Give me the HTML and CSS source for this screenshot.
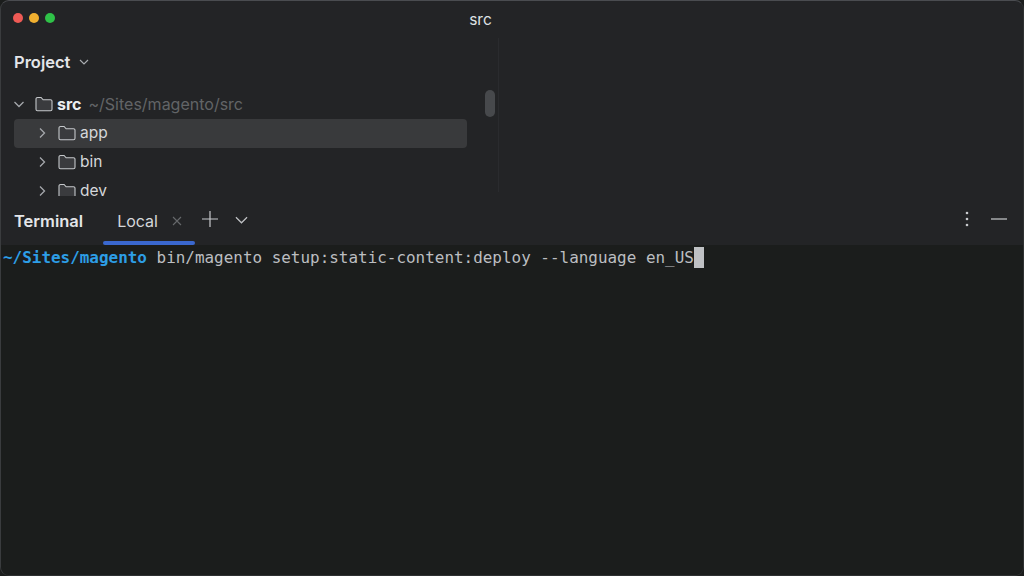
FILE: index.html
```html
<!DOCTYPE html>
<html lang="en">
<head>
<meta charset="utf-8">
<title>src</title>
<link rel="stylesheet" href="styles.css">
</head>
<body>
<div class="window">
  <header class="titlebar">
    <div class="lights">
      <span class="light red"></span>
      <span class="light yellow"></span>
      <span class="light green"></span>
    </div>
    <div class="title">src</div>
  </header>
  <main class="workspace">
    <section class="project">
      <div class="project-head">
        <span class="project-title">Project</span>
        <svg class="ic-head" viewBox="0 0 12 12"><path d="M2 4l4 4 4-4"/></svg>
      </div>
      <ul class="tree">
        <li class="row root">
          <svg class="arrow" viewBox="0 0 12 12"><path d="M1.500 4l4.500 4.500L10.500 4"/></svg>
          <svg class="folder" viewBox="0 0 18 16"><path class="folder-fill" d="M1 3a1.5 1.5 0 0 1 1.5-1.5h3.6l2 2.3h7.4A1.5 1.5 0 0 1 17 5.300v8a1.500 1.500 0 0 1-1.500 1.500h-13A1.500 1.500 0 0 1 1 13.300z"/></svg>
          <span class="name strong">src</span>
          <span class="path">~/Sites/magento/src</span>
        </li>
        <li class="row child selected">
          <svg class="arrow" viewBox="0 0 12 12"><path d="M4 1.500l4.500 4.500L4 10.500"/></svg>
          <svg class="folder" viewBox="0 0 18 16"><path class="folder-fill" d="M1 3a1.5 1.5 0 0 1 1.5-1.5h3.6l2 2.3h7.4A1.5 1.5 0 0 1 17 5.300v8a1.500 1.500 0 0 1-1.500 1.500h-13A1.500 1.500 0 0 1 1 13.300z"/></svg>
          <span class="name">app</span>
        </li>
        <li class="row child">
          <svg class="arrow" viewBox="0 0 12 12"><path d="M4 1.500l4.500 4.500L4 10.500"/></svg>
          <svg class="folder" viewBox="0 0 18 16"><path class="folder-fill" d="M1 3a1.5 1.5 0 0 1 1.5-1.5h3.6l2 2.3h7.4A1.5 1.5 0 0 1 17 5.300v8a1.500 1.500 0 0 1-1.500 1.500h-13A1.500 1.500 0 0 1 1 13.300z"/></svg>
          <span class="name">bin</span>
        </li>
        <li class="row child">
          <svg class="arrow" viewBox="0 0 12 12"><path d="M4 1.500l4.500 4.500L4 10.500"/></svg>
          <svg class="folder" viewBox="0 0 18 16"><path class="folder-fill" d="M1 3a1.5 1.5 0 0 1 1.5-1.5h3.6l2 2.3h7.4A1.5 1.5 0 0 1 17 5.300v8a1.500 1.500 0 0 1-1.500 1.500h-13A1.500 1.500 0 0 1 1 13.300z"/></svg>
          <span class="name">dev</span>
        </li>
      </ul>
      <div class="scroll-thumb"></div>
    </section>
    <section class="editor"></section>
  </main>
  <nav class="toolbar">
    <span class="tool-title">Terminal</span>
    <div class="tab">
      <span class="tab-label">Local</span>
      <svg class="tab-close" viewBox="0 0 10 10"><path d="M1 1l8 8M9 1l-8 8"/></svg>
    </div>
    <svg class="ic-plus" viewBox="0 0 16 16"><path d="M8 0v16M0 8h16"/></svg>
    <svg class="ic-chevron" viewBox="0 0 14 8"><path d="M1 1l6 6 6-6"/></svg>
    <div class="tool-actions">
      <svg class="ic-more" viewBox="0 0 4 16"><circle cx="2" cy="2" r="1.300"/><circle cx="2" cy="8" r="1.300"/><circle cx="2" cy="14" r="1.300"/></svg>
      <svg class="ic-min" viewBox="0 0 16 2"><path d="M0 1h16"/></svg>
    </div>
  </nav>
  <section class="terminal">
    <div class="line"><span class="cwd">~/Sites/magento</span><span class="cmd"> bin/magento setup:static-content:deploy --language en_US</span><span class="cursor"></span></div>
  </section>
</div>
</body>
</html>
```
FILE: styles.css
```css
* { box-sizing: border-box; }
html, body { margin: 0; padding: 0; width: 1024px; height: 576px; overflow: hidden; background: #1b1d1c; }
body { font-family: Inter, "Noto Sans", sans-serif; color: #d8dadd; }
.window { width: 1024px; height: 576px; display: flex; flex-direction: column; background: #232426; border-top: 1px solid #4a4c50; border-left: 1px solid #3a3c3e; border-right: 1px solid #2e3031; border-bottom: 1px solid #2e3031; border-radius: 9px; overflow: hidden; }
.titlebar { height: 37px; flex: none; position: relative; display: flex; align-items: center; justify-content: center; }
.lights { position: absolute; left: 12px; top: 12px; display: flex; gap: 6px; }
.light { width: 10px; height: 10px; border-radius: 50%; }
.red { background: #ee5a55; }
.yellow { background: #f0b030; }
.green { background: #2fc248; }
.title { font-size: 15.500px; color: #dfe1e4; padding-right: 63px; }
.workspace { height: 158px; flex: none; display: flex; }
.project { width: 497px; height: 158px; flex: none; position: relative; overflow: hidden; }
.project-head { height: 52px; padding: 0 0 4px 13px; display: flex; align-items: center; gap: 8px; }
.project-title { font-size: 16.500px; font-weight: 600; color: #e4e6e9; }
.ic-head { width: 12px; height: 12px; fill: none; stroke: #a8abaf; stroke-width: 1.200; }
.tree { list-style: none; margin: 0; padding: 0 0 0 13px; }
.row { width: 453px; height: 29px; display: flex; align-items: center; border-radius: 4px; padding-bottom: 2px; }
.root { margin-left: -1px; }
.child { padding-left: 22px; }
.selected { background: #393a3c; }
.arrow { width: 12px; height: 12px; fill: none; stroke: #a5a8ac; stroke-width: 1.300; flex: none; }
.folder { width: 18px; height: 16px; margin-left: 10px; flex: none; }
.folder-fill { fill: #3a3b3e; stroke: #c5c8cb; stroke-width: 1.100; }
.name { font-size: 15.500px; margin-left: 4px; color: #d5d7da; }
.strong { font-size: 16px; font-weight: 700; color: #eceef0; margin-left: 4px; }
.path { font-size: 16px; color: #626467; margin-left: 7px; }
.scroll-thumb { position: absolute; left: 484px; top: 52px; width: 10px; height: 27px; border-radius: 5px; background: #47494c; }
.editor { flex: 1; height: 154px; border-left: 1px solid #2a2b2e; }
.toolbar { height: 49px; flex: none; display: flex; align-items: center; position: relative; padding-left: 13px; background: #232426; }
.tool-title { font-size: 16.500px; font-weight: 600; color: #e4e6e9; }
.tab { position: relative; height: 49px; width: 92px; margin-left: 20px; display: flex; align-items: center; padding-left: 14px; flex: none; }
.tab::after { content: ""; position: absolute; left: 0; right: 0; bottom: 0; height: 4px; border-radius: 2px; background: #3a68cf; }
.tab-label { font-size: 16px; color: #d5d7da; }
.tab-close { width: 10px; height: 10px; margin-left: 14px; fill: none; stroke: #66686b; stroke-width: 1.100; }
.ic-plus { width: 16px; height: 16px; margin-left: 7px; margin-top: -3px; fill: none; stroke: #c8cacd; stroke-width: 1.200; flex: none; }
.ic-chevron { width: 13px; height: 8px; margin-left: 17px; margin-top: -2px; fill: none; stroke: #c0c2c5; stroke-width: 1.300; flex: none; }
.tool-actions { margin-left: auto; display: flex; align-items: center; gap: 22px; padding-right: 16px; margin-top: -3px; }
.ic-more { width: 4px; height: 16px; fill: #c8cacd; }
.ic-min { width: 16px; height: 2px; stroke: #a8aaad; stroke-width: 1.300; }
.terminal { flex: 1; background: #1b1d1c; padding: 0 0 0 2px; }
.line { height: 24px; display: flex; align-items: center; font-family: "DejaVu Sans Mono", "Liberation Mono", monospace; font-size: 15.950px; white-space: pre; color: #bfc1c4; }
.cwd { color: #2d9ee6; font-weight: 700; }
.cmd { color: #bcbec1; }
.cursor { width: 10px; height: 21px; background: #bfc1c4; }
```
